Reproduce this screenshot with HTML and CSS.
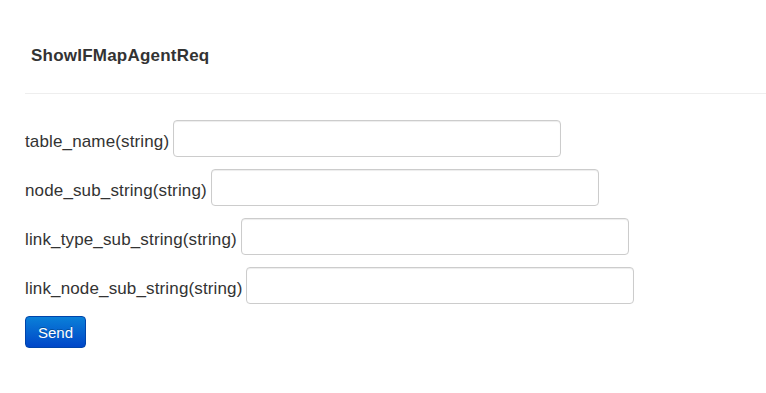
FILE: index.html
```html
<!DOCTYPE html>
<html>
<head>
<meta charset="utf-8">
<link rel="stylesheet" href="styles.css">
</head>
<body>
<div class="page">
  <div class="header">
    <h1 class="title">ShowIFMapAgentReq</h1>
  </div>
  <form class="form">
    <div class="row">
      <label class="label">table_name(string)</label>
      <input class="field" type="text">
    </div>
    <div class="row">
      <label class="label">node_sub_string(string)</label>
      <input class="field" type="text">
    </div>
    <div class="row">
      <label class="label">link_type_sub_string(string)</label>
      <input class="field" type="text">
    </div>
    <div class="row">
      <label class="label">link_node_sub_string(string)</label>
      <input class="field" type="text">
    </div>
    <button class="btn" type="button">Send</button>
  </form>
</div>
</body>
</html>
```
FILE: styles.css
```css
html, body {
  margin: 0;
  padding: 0;
  background: #fff;
}
body {
  font-family: "Liberation Sans", Arial, sans-serif;
  color: #333;
  width: 766px;
  height: 393px;
  overflow: hidden;
}
.page {
  padding-left: 25px;
}
.header {
  padding: 46px 0 27px 6px;
  border-bottom: 1px solid #eeeeee;
}
.title {
  margin: 0;
  font-size: 17px;
  line-height: 20px;
  font-weight: bold;
  letter-spacing: 0.22px;
  color: #333;
}
.form {
  padding-top: 26px;
  margin: 0;
}
.row {
  display: flex;
  align-items: flex-start;
  gap: 4px;
  margin-bottom: 12px;
}
.label {
  font-size: 17px;
  line-height: 20px;
  padding-top: 12px;
  letter-spacing: 0.14px;
  color: #333;
  white-space: nowrap;
}
.field {
  box-sizing: border-box;
  width: 388px;
  height: 37px;
  margin: 0;
  border: 1px solid #cccccc;
  border-radius: 4px;
  background: #fff;
  box-shadow: inset 0 1px 1px rgba(0,0,0,0.075);
  font-size: 15px;
  padding: 6px 10px;
}
.btn {
  display: block;
  box-sizing: border-box;
  width: 61px;
  height: 32px;
  margin-top: 2px;
  padding: 0;
  border: 1px solid #0044aa;
  border-radius: 4px;
  background: linear-gradient(to bottom, #0a80d8, #0046c8);
  color: #fff;
  font-family: "Liberation Sans", Arial, sans-serif;
  font-size: 15px;
  text-shadow: 0 -1px 0 rgba(0,0,0,0.25);
}
```
